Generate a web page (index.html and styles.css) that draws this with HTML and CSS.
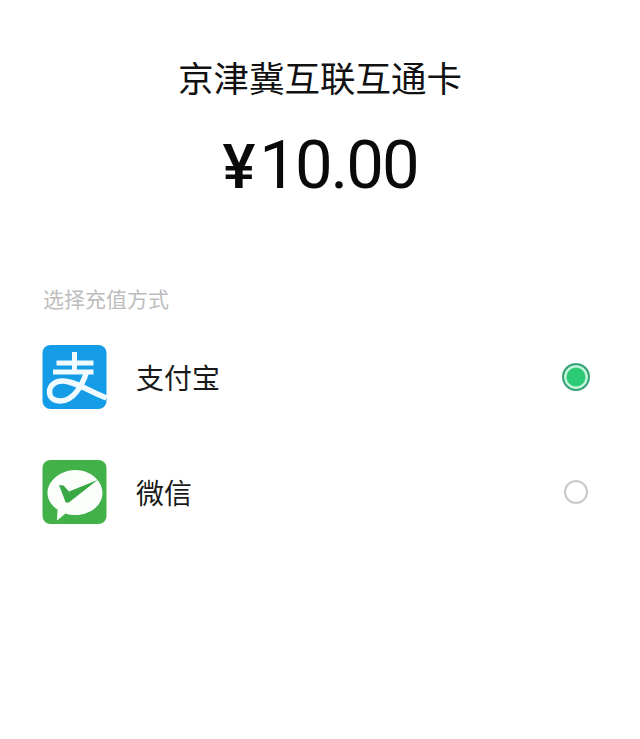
FILE: index.html
```html
<!DOCTYPE html>
<html lang="zh-CN">
<head>
<meta charset="utf-8">
<title>京津冀互联互通卡</title>
<link rel="stylesheet" href="styles.css">
</head>
<body>
<main class="page">
  <h1 class="title">京津冀互联互通卡</h1>
  <div class="amount"><span class="currency">¥</span>10.00</div>
  <h2 class="label">选择充值方式</h2>
  <ul class="methods">
    <li class="method">
      <svg class="icon" viewBox="0 0 64 64" aria-hidden="true">
        <rect width="64" height="64" rx="8" fill="#149ce6"/>
        <g fill="none" stroke="#f0faff">
          <path d="M14 18H51M32 7V27M10.500 27H51" stroke-width="5"/>
          <path d="M44 27C40 40 31 56 18 56C11 56 7 52 7 47C7 40 13 36 20 36C32 36 46 46 64 53" stroke-width="5.500"/>
        </g>
      </svg>
      <span class="name">支付宝</span>
      <span class="radio radio-on"></span>
    </li>
    <li class="method">
      <svg class="icon" viewBox="0 0 64 64" aria-hidden="true">
        <rect width="64" height="64" rx="8" fill="#43b14a"/>
        <path d="M33 10C48 10 60 21 60 33C60 45 48 55 33 55C29.500 55 26 54.500 23 53.500L14.500 60.500L15 49.500C9 45.500 5 39.500 5 33C5 21 18 10 33 10Z" fill="#fbfefb"/>
        <path d="M16.500 25L23 42C24 43 25.500 43 27 42L55 20L26.500 31.500L21 25.500Z" fill="#3aa845"/>
      </svg>
      <span class="name">微信</span>
      <span class="radio"></span>
    </li>
  </ul>
</main>
</body>
</html>
```
FILE: styles.css
```css
* {
  box-sizing: border-box;
}

html,
body {
  margin: 0;
  background: #fff;
}

.page {
  width: 640px;
  height: 739px;
  padding-top: 54px;
  overflow: hidden;
  color: #111;
  font-family: "Noto Sans CJK SC", "Noto Sans", sans-serif;
}

.title {
  margin: 0;
  font-size: 35.5px;
  line-height: 46px;
  font-weight: 400;
  text-align: center;
}

.amount {
  margin-top: 26px;
  font-family: "Roboto", "Noto Sans", sans-serif;
  font-size: 67px;
  line-height: 78px;
  font-weight: 400;
  letter-spacing: -2px;
  text-align: center;
  color: #0a0a0a;
}

.currency {
  margin-right: 4px;
  font-size: 62px;
  font-weight: 500;
  letter-spacing: 0;
}

.label {
  margin: 77px 0 0 43px;
  font-size: 21px;
  line-height: 30px;
  font-weight: 400;
  color: #bdbdbd;
}

.methods {
  list-style: none;
  margin: 32px 0 0;
  padding: 0 50px 0 42px;
  display: flex;
  flex-direction: column;
  gap: 51px;
}

.method {
  display: flex;
  align-items: center;
  height: 64px;
}

.icon {
  width: 65px;
  height: 64px;
  flex: none;
}

.name {
  flex: 1;
  margin-left: 29px;
  font-size: 28px;
  line-height: 40px;
  color: #1a1a1a;
}

.radio {
  width: 24px;
  height: 24px;
  margin-right: 2px;
  border: 2px solid #c9c9c9;
  border-radius: 50%;
  background: #fff;
}

.radio-on {
  width: 28px;
  height: 28px;
  margin-right: 0;
  border: 2px solid #3aa37a;
  background: #2dcb76;
  box-shadow: inset 0 0 0 2.500px #c6f3dc;
}
```
